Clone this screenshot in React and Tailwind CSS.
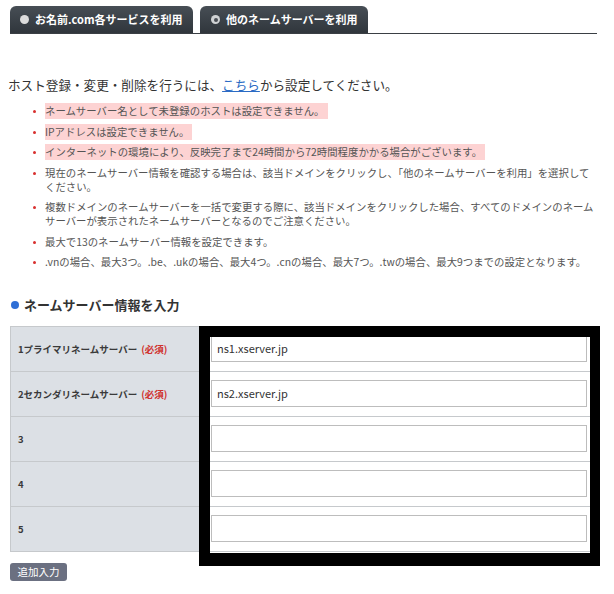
const FONT = { fontFamily: '"Noto Sans CJK JP", "Noto Sans", sans-serif' }

const NOTES = [
  { text: 'ネームサーバー名として未登録のホストは設定できません。', warn: true },
  { text: 'IPアドレスは設定できません。', warn: true },
  { text: 'インターネットの環境により、反映完了まで24時間から72時間程度かかる場合がございます。', warn: true },
  { lines: ['現在のネームサーバー情報を確認する場合は、該当ドメインをクリックし、「他のネームサーバーを利用」を選択して', 'ください。'] },
  { lines: ['複数ドメインのネームサーバーを一括で変更する際に、該当ドメインをクリックした場合、すべてのドメインのネーム', 'サーバーが表示されたネームサーバーとなるのでご注意ください。'] },
  { text: '最大で13のネームサーバー情報を設定できます。' },
  { text: '.vnの場合、最大3つ。.be、.ukの場合、最大4つ。.cnの場合、最大7つ。.twの場合、最大9つまでの設定となります。' },
]

const ROWS = [
  { label: '1プライマリネームサーバー', required: true, value: 'ns1.xserver.jp' },
  { label: '2セカンダリネームサーバー', required: true, value: 'ns2.xserver.jp' },
  { label: '3', value: '' },
  { label: '4', value: '' },
  { label: '5', value: '' },
]

function Tab({ label, selected, className }) {
  return (
    <div
      className={`h-[27px] rounded-t-[6px] bg-gradient-to-b from-[#474e55] to-[#30363c] flex items-center pl-[10px] gap-[6px] ${className}`}
    >
      {selected ? (
        <span className="w-[9px] h-[9px] rounded-full bg-[#cfd2d4] flex items-center justify-center">
          <span className="w-[4px] h-[4px] rounded-full bg-[#4a4f55]" />
        </span>
      ) : (
        <span className="w-[9px] h-[9px] rounded-full bg-[#dcdcdc]" />
      )}
      <span className="text-white font-bold text-[11px] leading-none whitespace-nowrap">{label}</span>
    </div>
  )
}

export default function App() {
  return (
    <div className="w-[614px] h-[594px] bg-white text-[#333] overflow-hidden" style={FONT}>
      {/* tabs */}
      <div className="pt-[6px] px-[10px]">
        <div className="flex items-end gap-[7px] w-[587px] border-b border-[#3a3f44]">
          <Tab label="お名前.com各サービスを利用" className="w-[183px]" />
          <Tab label="他のネームサーバーを利用" selected className="w-[168px] pl-[11px]" />
        </div>
      </div>

      <p className="mt-[41px] ml-[8px] text-[12.6px] leading-[20px] text-[#333] whitespace-nowrap">
        ホスト登録・変更・削除を行うには、
        <span className="text-[#2b6bc4] underline">こちら</span>
        から設定してください。
      </p>

      <ul className="mt-[9px] pl-[33px]">
        {NOTES.map((n, i) => (
          <li key={i} className="flex mb-[6.5px] text-[10.4px] leading-[14px] text-[#555]">
            <span className="w-[3px] h-[3px] bg-[#d8302e] rounded-full mt-[6px] mr-[9px] shrink-0" />
            {n.lines ? (
              <span className="whitespace-nowrap">
                {n.lines[0]}
                <br />
                {n.lines[1]}
              </span>
            ) : (
              <span
                className={`whitespace-nowrap ${n.warn ? 'bg-[#fdd3d3] py-[1px] -my-[1px] pr-[3px]' : ''}`}
              >
                {n.text}
              </span>
            )}
          </li>
        ))}
      </ul>

      <div className="mt-[26px] ml-[11px] flex items-center gap-[5px]">
        <span className="w-[8px] h-[8px] rounded-full bg-[#2f6fd6]" />
        <span className="text-[13px] leading-[20px] font-bold text-[#333]">ネームサーバー情報を入力</span>
      </div>

      {/* name server table */}
      <div className="relative mt-[11px] mx-[10px] w-[587px] border-t border-[#c6c9cc]">
        {ROWS.map((r) => (
          <div key={r.label} className="flex h-[45px] border-b border-[#c6c9cc]">
            <div className="w-[189px] bg-[#dce0e5] border-l border-[#c6c9cc] flex items-center pl-[7px] text-[9.5px] font-bold text-[#3a3a3a] whitespace-nowrap">
              {r.label}
              {r.required && <span className="ml-[4px] text-[#d0312d]">(必須)</span>}
            </div>
            <div className="flex-1 pt-[8px] pl-[12px]">
              <div className="w-[376px] h-[27px] border border-[#bdbdbd] bg-white flex items-center pl-[5px] text-[11px] text-[#333]">
                {r.value}
              </div>
            </div>
          </div>
        ))}
        <div className="absolute left-[189px] top-[-1px] w-[401px] h-[240px] border-l-[11px] border-t-[11px] border-r-[10px] border-b-[13px] border-black pointer-events-none" />
      </div>

      <button className="mt-[11px] ml-[10px] w-[57px] h-[18px] rounded-[3px] bg-[#6b7081] text-white text-[10.5px] leading-none">
        追加入力
      </button>
    </div>
  )
}
